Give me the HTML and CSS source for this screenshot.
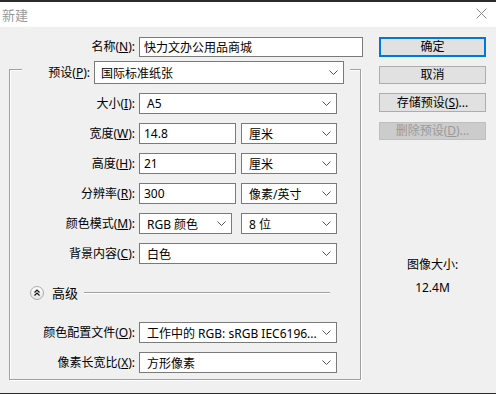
FILE: index.html
```html
<!DOCTYPE html>
<html lang="zh-CN">
<head>
<meta charset="utf-8">
<title>新建</title>
<link rel="stylesheet" href="styles.css">
</head>
<body>
<div class="window">
  <div class="titlebar">
    <span class="title">新建</span>
    <svg class="close" width="11" height="11" viewBox="0 0 11 11"><path d="M0.5 0.5 L10.5 10.5 M10.5 0.5 L0.5 10.5" stroke="#8a8a8a" stroke-width="1" fill="none"/></svg>
  </div>
  <div class="client">
    <div class="left">
      <div class="row name-row">
        <label class="lbl">名称(<u>N</u>):</label>
        <div class="input name-input">快力文办公用品商城</div>
      </div>
      <div class="group">
        <div class="group-head">
          <label class="lbl head-lbl">预设(<u>P</u>):</label>
          <div class="select preset"><span>国际标准纸张</span><svg class="chev" width="9" height="5" viewBox="0 0 9 5"><path d="M0.5 0.5 L4.5 4.5 L8.5 0.5" stroke="#555" fill="none"/></svg></div>
        </div>
        <div class="rows">
          <div class="row">
            <label class="lbl">大小(<u>I</u>):</label>
            <div class="select full"><span>A5</span><svg class="chev" width="9" height="5" viewBox="0 0 9 5"><path d="M0.5 0.5 L4.5 4.5 L8.5 0.5" stroke="#555" fill="none"/></svg></div>
          </div>
          <div class="row">
            <label class="lbl">宽度(<u>W</u>):</label>
            <div class="input half">14.8</div>
            <div class="select unit"><span>厘米</span><svg class="chev" width="9" height="5" viewBox="0 0 9 5"><path d="M0.5 0.5 L4.5 4.5 L8.5 0.5" stroke="#555" fill="none"/></svg></div>
          </div>
          <div class="row">
            <label class="lbl">高度(<u>H</u>):</label>
            <div class="input half">21</div>
            <div class="select unit"><span>厘米</span><svg class="chev" width="9" height="5" viewBox="0 0 9 5"><path d="M0.5 0.5 L4.5 4.5 L8.5 0.5" stroke="#555" fill="none"/></svg></div>
          </div>
          <div class="row">
            <label class="lbl">分辨率(<u>R</u>):</label>
            <div class="input half">300</div>
            <div class="select unit"><span>像素/英寸</span><svg class="chev" width="9" height="5" viewBox="0 0 9 5"><path d="M0.5 0.5 L4.5 4.5 L8.5 0.5" stroke="#555" fill="none"/></svg></div>
          </div>
          <div class="row">
            <label class="lbl">颜色模式(<u>M</u>):</label>
            <div class="select mode"><span>RGB 颜色</span><svg class="chev" width="9" height="5" viewBox="0 0 9 5"><path d="M0.5 0.5 L4.5 4.5 L8.5 0.5" stroke="#555" fill="none"/></svg></div>
            <div class="select bits"><span>8 位</span><svg class="chev" width="9" height="5" viewBox="0 0 9 5"><path d="M0.5 0.5 L4.5 4.5 L8.5 0.5" stroke="#555" fill="none"/></svg></div>
          </div>
          <div class="row">
            <label class="lbl">背景内容(<u>C</u>):</label>
            <div class="select full"><span>白色</span><svg class="chev" width="9" height="5" viewBox="0 0 9 5"><path d="M0.5 0.5 L4.5 4.5 L8.5 0.5" stroke="#555" fill="none"/></svg></div>
          </div>
        </div>
        <div class="adv">
          <svg class="adv-btn" width="14" height="14" viewBox="0 0 14 14">
            <defs><linearGradient id="g" x1="0" y1="0" x2="0" y2="1"><stop offset="0" stop-color="#ffffff"/><stop offset="1" stop-color="#e4e4e4"/></linearGradient></defs>
            <circle cx="7" cy="7" r="6.5" fill="url(#g)" stroke="#a8a8a8"/>
            <path d="M4.5 6.5 L7 4 L9.5 6.5 M4.5 9.5 L7 7 L9.5 9.5" stroke="#111" stroke-width="1.2" fill="none"/>
          </svg>
          <span class="adv-txt">高级</span>
          <span class="adv-line"></span>
        </div>
        <div class="rows adv-rows">
          <div class="row">
            <label class="lbl">颜色配置文件(<u>O</u>):</label>
            <div class="select full"><span>工作中的 RGB: sRGB IEC6196...</span><svg class="chev" width="9" height="5" viewBox="0 0 9 5"><path d="M0.5 0.5 L4.5 4.5 L8.5 0.5" stroke="#555" fill="none"/></svg></div>
          </div>
          <div class="row">
            <label class="lbl">像素长宽比(<u>X</u>):</label>
            <div class="select full"><span>方形像素</span><svg class="chev" width="9" height="5" viewBox="0 0 9 5"><path d="M0.5 0.5 L4.5 4.5 L8.5 0.5" stroke="#555" fill="none"/></svg></div>
          </div>
        </div>
      </div>
    </div>
    <div class="right">
      <div class="btn ok">确定</div>
      <div class="btn cancel">取消</div>
      <div class="btn save">存储预设(<u>S</u>)...</div>
      <div class="btn del disabled">删除预设(<u>D</u>)...</div>
      <div class="size-lbl">图像大小:</div>
      <div class="size-val">12.4M</div>
    </div>
  </div>
</div>
</body>
</html>
```

FILE: styles.css
```css
* { box-sizing: border-box; }
html, body { margin: 0; padding: 0; }
body {
  width: 496px;
  height: 394px;
  background: #2b2b2b;
  font-family: "Noto Sans", "Noto Sans CJK SC", sans-serif;
  font-size: 12px;
  color: #000;
  overflow: hidden;
}
u { text-decoration: underline; text-underline-offset: 1px; }
.window { padding-top: 2px; }
.titlebar {
  height: 25px;
  background: #fff;
  display: flex;
  align-items: center;
  justify-content: space-between;
  padding: 0 9px 0 2px;
}
.title { color: #999; font-size: 13px; font-family: "Noto Sans CJK SC", sans-serif; }
.close { display: block; margin-top: -2px; }
.client {
  height: 366px;
  background: #f0f0f0;
  display: flex;
}
.left { width: 370px; padding: 10px 0 0 9px; }
.row { display: flex; align-items: center; height: 21px; }
.lbl {
  width: 126px;
  text-align: right;
  margin-right: 4px;
  white-space: nowrap;
  line-height: 16px;
}
.name-row { height: 20px; }
.input, .select {
  height: 21px;
  background: #fff;
  border: 1px solid #7a7a7a;
  display: flex;
  align-items: center;
  white-space: nowrap;
  overflow: hidden;
}
.input { padding-left: 4px; }
.select { padding: 0 5px 0 7px; justify-content: space-between; }
.chev { flex: none; display: block; }
.name-input { width: 224px; height: 20px; }
.group {
  margin-top: 12px;
  width: 352px;
  height: 311px;
  border: 1px solid #a0a0a0;
  box-shadow: inset 1px 1px 0 #fff, 1px 1px 0 #fff;
}
.group-head {
  margin: -9px 0 0 12px;
  width: 328px;
  height: 23px;
  background: #f0f0f0;
  display: flex;
  align-items: center;
  padding-right: 6px;
}
.head-lbl { width: auto; flex: 1; }
.preset { width: 250px; height: 23px; padding-left: 6px; }
.rows { display: flex; flex-direction: column; gap: 9px; margin-top: 9px; }
.rows .lbl { width: 125px; }
.full { width: 198px; }
.half { width: 97px; }
.unit { width: 96px; margin-left: 5px; }
.mode { width: 93px; }
.bits { width: 96px; margin-left: 9px; }
.adv {
  display: flex;
  align-items: center;
  height: 14px;
  margin: 22px 0 0 20px;
}
.adv-btn { display: block; flex: none; }
.adv-txt { margin-left: 8px; font-size: 13px; line-height: 16px; font-family: "Noto Sans CJK SC", sans-serif; }
.adv-line {
  width: 246px;
  margin-left: 6px;
  border-top: 1px solid #a0a0a0;
  border-bottom: 1px solid #fff;
}
.adv-rows { margin-top: 22px; }
.right {
  margin-left: 9px;
  width: 107px;
  padding-top: 10px;
  display: flex;
  flex-direction: column;
}
.btn {
  background: #e1e1e1;
  border: 1px solid #adadad;
  display: flex;
  align-items: center;
  justify-content: center;
  white-space: nowrap;
  line-height: 16px;
}
.ok { height: 20px; border: 2px solid #0078d7; }
.cancel { height: 18px; margin-top: 9px; }
.save { height: 19px; margin-top: 9px; }
.del { height: 18px; margin-top: 10px; }
.disabled { background: #cccccc; border-color: #bfbfbf; color: #9a9a9a; }
.size-lbl { margin-top: 117px; text-align: center; line-height: 16px; }
.size-val { margin-top: 7px; text-align: center; line-height: 16px; }
```
